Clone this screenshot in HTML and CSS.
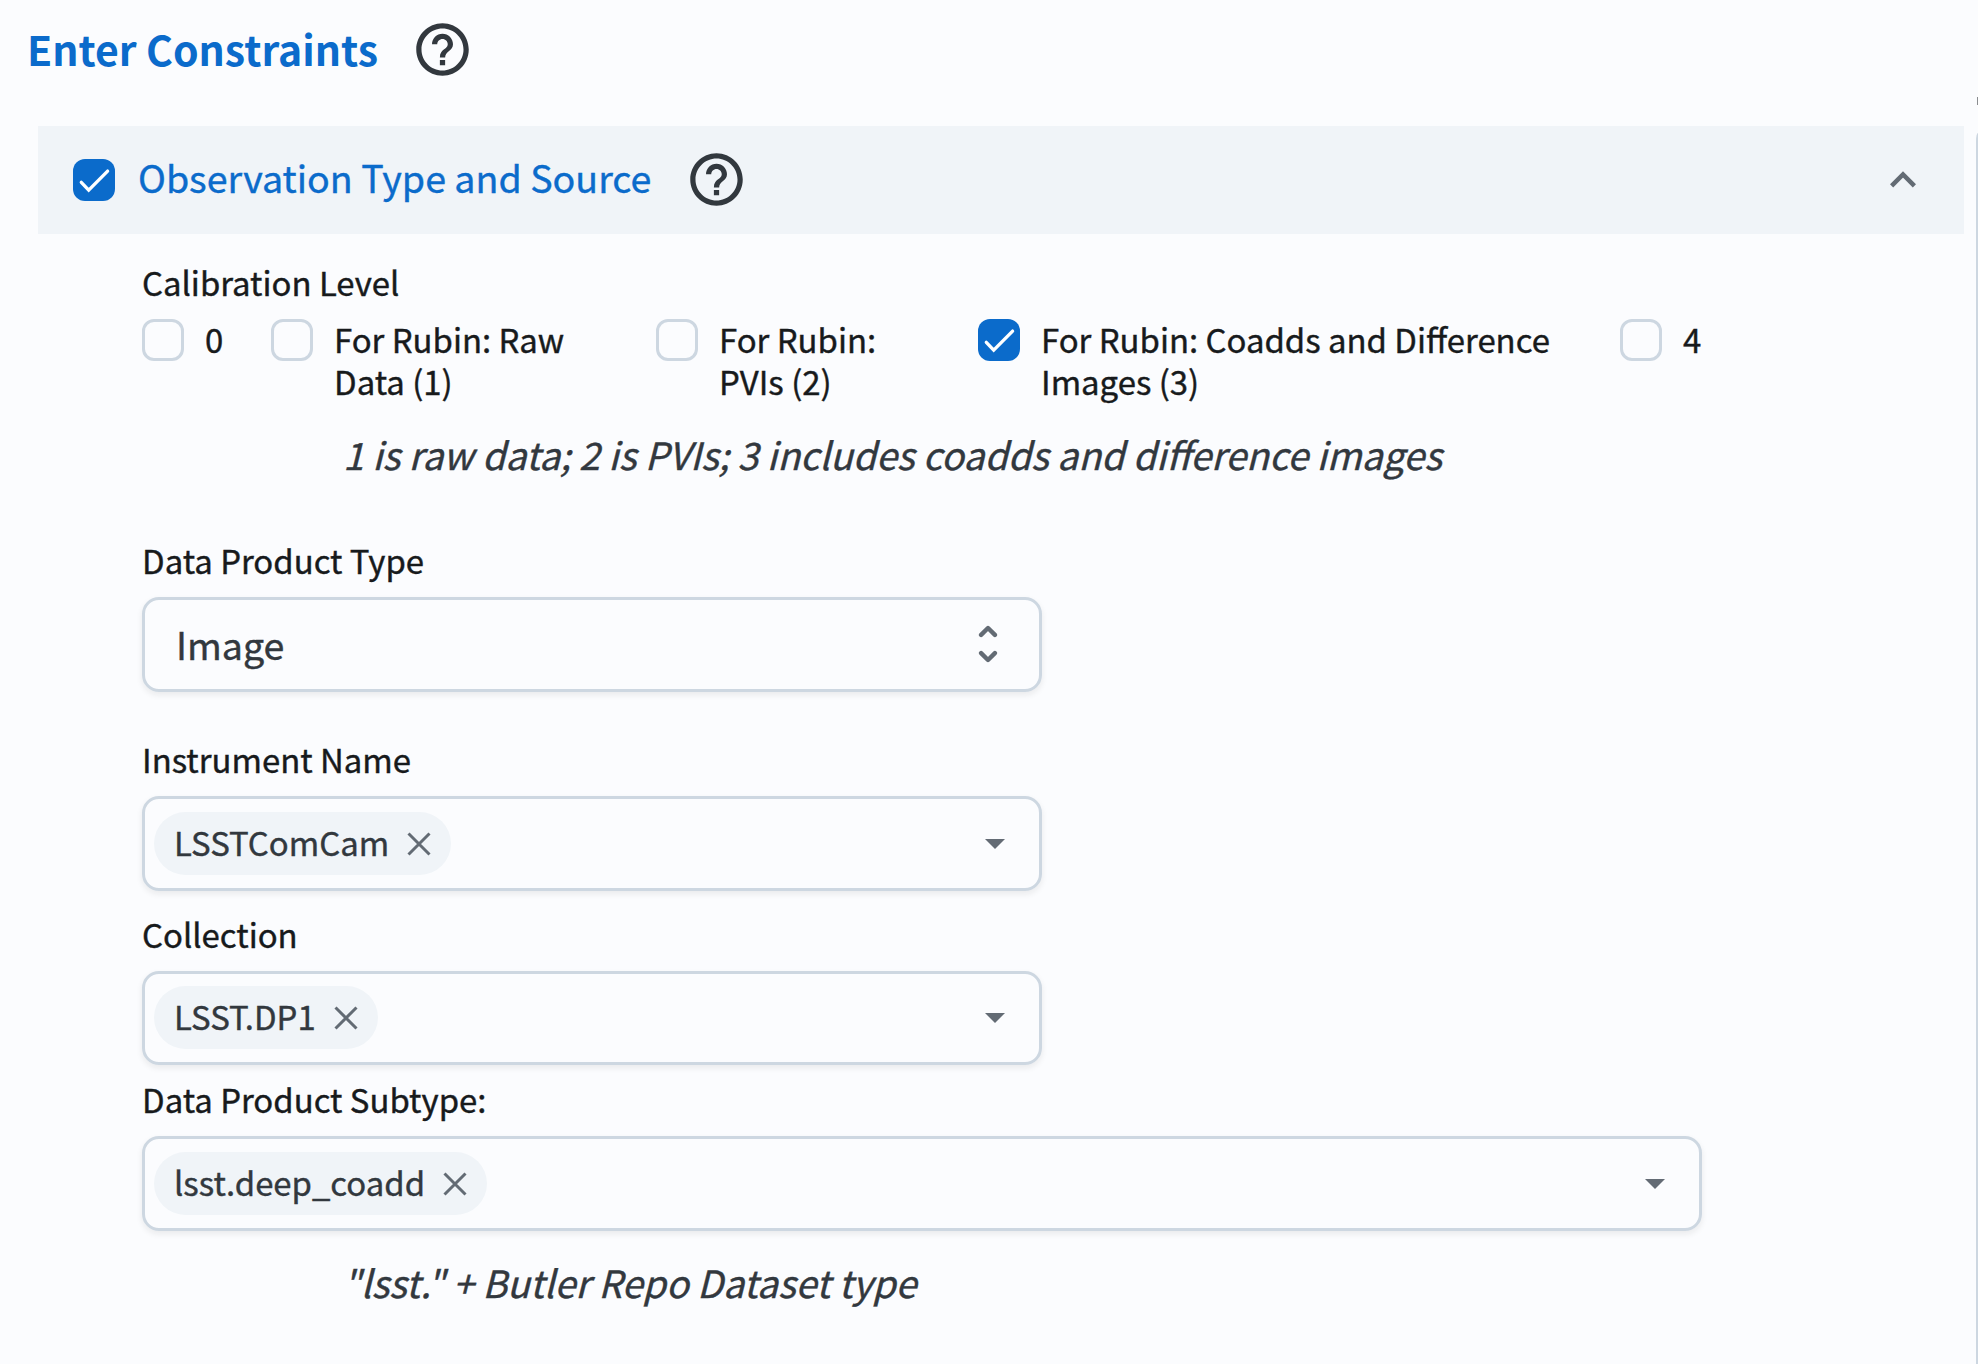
FILE: index.html
```html
<!DOCTYPE html>
<html lang="en">
<head>
<meta charset="utf-8">
<title>Enter Constraints</title>
<link rel="stylesheet" href="styles.css">
</head>
<body>
<svg class="defs" width="0" height="0">
  <symbol id="help" viewBox="0 0 24 24"><path d="M11 18h2v-2h-2v2zm1-16C6.480 2 2 6.480 2 12s4.480 10 10 10 10-4.480 10-10S17.520 2 12 2zm0 18c-4.410 0-8-3.590-8-8s3.590-8 8-8 8 3.590 8 8-3.590 8-8 8zm0-14c-2.210 0-4 1.790-4 4h2c0-1.100.9-2 2-2s2 .9 2 2c0 2-3 1.750-3 5h2c0-2.250 3-2.500 3-5 0-2.210-1.790-4-4-4z"/></symbol>
  <symbol id="check" viewBox="0 0 42 42"><path d="M8.300 23.300l7.400 7.900 18.900-19.100" fill="none" stroke="currentColor" stroke-width="3.300" stroke-linecap="round"/></symbol>
  <symbol id="close" viewBox="0 0 24 24"><path d="M1.500 1.500l21 21M22.500 1.500l-21 21" fill="none" stroke="currentColor" stroke-width="3"/></symbol>
  <symbol id="arrow" viewBox="0 0 20 10"><path d="M0 0h20L10 10z"/></symbol>
</svg>
<main class="panel">
  <header class="title">
    <h1>Enter Constraints</h1>
    <svg class="help"><use href="#help"/></svg>
  </header>
  <section>
    <div class="bar">
      <span class="box checked"><svg><use href="#check"/></svg></span>
      <h2>Observation Type and Source</h2>
      <svg class="help"><use href="#help"/></svg>
      <svg class="chevron" viewBox="0 0 26 17"><path d="M1.600 14.900 13 3.500l11.400 11.400" fill="none" stroke="currentColor" stroke-width="4.500"/></svg>
    </div>
    <div class="fields">
      <div class="label">Calibration Level</div>
      <div class="levels">
        <label class="level"><span class="box"></span><span class="text">0</span></label>
        <label class="level"><span class="box"></span><span class="text">For Rubin: Raw<br>Data (1)</span></label>
        <label class="level"><span class="box"></span><span class="text">For Rubin:<br>PVIs (2)</span></label>
        <label class="level"><span class="box checked"><svg><use href="#check"/></svg></span><span class="text">For Rubin: Coadds and Difference<br>Images (3)</span></label>
        <label class="level"><span class="box"></span><span class="text">4</span></label>
      </div>
      <p class="hint levels-hint">1 is raw data; 2 is PVIs; 3 includes coadds and difference images</p>
      <div class="label product">Data Product Type</div>
      <div class="input select"><span class="value">Image</span>
        <svg class="unfold" viewBox="0 0 20 40"><path d="M3.100 10.900 10 4l6.900 6.900M3.100 29.100l6.900 6.900 6.900-6.900"/></svg>
      </div>
      <div class="label instrument">Instrument Name</div>
      <div class="input"><span class="chip"><span class="chip-a">LSSTComCam</span><svg><use href="#close"/></svg></span><svg class="arrow"><use href="#arrow"/></svg></div>
      <div class="label collection">Collection</div>
      <div class="input short"><span class="chip"><span class="chip-b">LSST.DP1</span><svg><use href="#close"/></svg></span><svg class="arrow"><use href="#arrow"/></svg></div>
      <div class="label subtype">Data Product Subtype:</div>
      <div class="input wide"><span class="chip"><span class="chip-c">lsst.deep_coadd</span><svg><use href="#close"/></svg></span><svg class="arrow"><use href="#arrow"/></svg></div>
      <p class="hint subtype-hint">"lsst." + Butler Repo Dataset type</p>
    </div>
  </section>
</main>
<aside class="next"><span class="next-text"></span><span class="next-edge"></span></aside>
</body>
</html>
```

FILE: styles.css
```css
* { box-sizing: border-box; }
body {
  margin: 0;
  width: 1978px;
  height: 1364px;
  overflow: hidden;
  display: flex;
  background: #fbfcfe;
  color: #171a1c;
  font-family: "Noto Sans CJK SC", "Noto Sans CJK JP", sans-serif;
  -webkit-text-stroke: .4px currentColor;
}
svg { display: block; fill: currentColor; flex: none; }
.defs { position: absolute; }
h1, h2, p { margin: 0; white-space: nowrap; }
.panel { width: 1976px; flex: none; }

.title { height: 126px; padding: 18px 0 0 27px; display: flex; align-items: flex-start; }
h1 { width: 384px; font-size: 41px; line-height: 60px; font-weight: 700; color: #0b6bcb; -webkit-text-stroke: 0; }
.help { width: 63px; height: 63px; color: #32383e; }

.bar { margin-left: 38px; width: 1926px; height: 108px; padding: 0 48px 0 35px; display: flex; align-items: center; background: #f0f4f8; }
.bar h2 { width: 547px; margin-left: 23px; padding-bottom: 6px; font-size: 37.6px; line-height: 60px; font-weight: 400; color: #0b6bcb; }
.bar .help { margin-bottom: 1px; }
.chevron { width: 26px; height: 17px; margin: 0 0 2px auto; color: #636b74; }

.box { width: 42px; height: 42px; flex: none; border: 3px solid #cdd7e1; border-radius: 12px; background: #fbfcfe; }
.box.checked { border: 0; background: #0b6bcb; color: #fff; }
.box svg { width: 42px; height: 42px; }

.fields { padding: 26px 0 0 142px; }
.label { height: 44px; font-size: 32.9px; line-height: 44px; white-space: nowrap; }
.levels { display: grid; grid-template-columns: 129px 385px 322px 642px auto; height: 84px; margin-top: 15px; font-size: 32.9px; line-height: 42px; white-space: nowrap; }
.level { display: flex; gap: 21px; }
.text { margin-top: -1px; }
.hint { height: 56px; font-size: 37.6px; line-height: 56px; font-style: italic; color: #32383e; }
.levels-hint { margin: 23px 0 0 201px; }
.product { margin-top: 56px; }
.instrument { margin-top: 45px; }
.collection { margin-top: 21px; }
.subtype { margin-top: 12px; }

.input { width: 900px; height: 95px; margin-top: 15px; padding: 0 34px 0 9px; display: flex; align-items: center; border: 3px solid #cdd7e1; border-radius: 17px; box-shadow: 0 3px 6px rgba(21, 21, 21, .08); color: #636b74; }
.input.short { height: 94px; padding-bottom: 1px; }
.input.wide { width: 1560px; }
.select { padding: 0 41px 0 31px; }
.value { padding-bottom: 1px; font-size: 37.6px; line-height: 60px; color: #32383e; }
.unfold { width: 20px; height: 40px; margin: 0 0 2px auto; fill: none; stroke: currentColor; stroke-width: 4.400; stroke-linecap: round; stroke-linejoin: round; }
.arrow { width: 20px; height: 10px; margin-left: auto; }
.chip { height: 63px; padding: 0 20px 0 20px; display: flex; align-items: center; border-radius: 32px; background: #f0f4f8; }
.chip span { padding-bottom: 3px; color: #32383e; font-size: 32.9px; line-height: 60px; white-space: nowrap; }
.chip svg { width: 24px; height: 24px; }
.chip-a { width: 233px; }
.chip-b { width: 160px; }
.chip-c { width: 269px; }
.subtype-hint { margin: 23px 0 0 201px; }

/* Left edge of the neighbouring panel */
.next { width: 2px; padding-top: 97px; flex: none; }
.next-text { display: block; width: 1px; height: 8px; margin-left: 1px; background: #8a8d90; }
.next-edge { display: block; height: 1231px; margin-top: 28px; background: #cdd7e1; border-top-left-radius: 2px 8px; }
```
